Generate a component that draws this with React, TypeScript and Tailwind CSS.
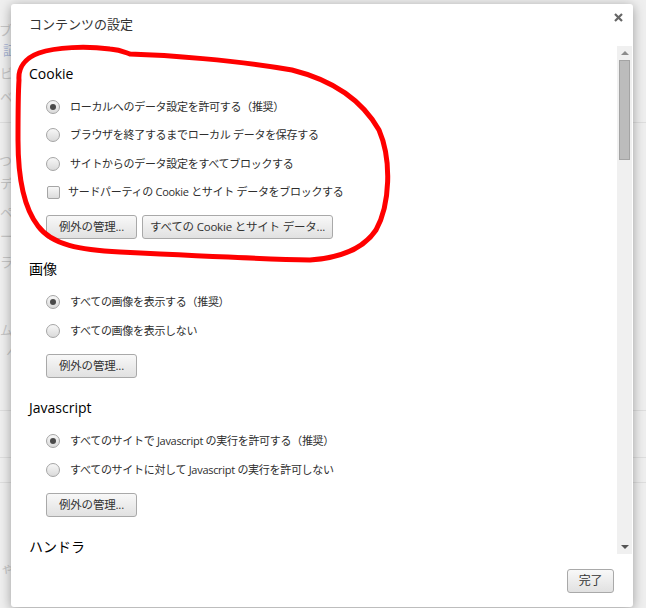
import type { ReactNode } from 'react'

function Radio({ checked = false }: { checked?: boolean }) {
  return (
    <span className="flex h-[14px] w-[14px] shrink-0 items-center justify-center rounded-full border border-[#a5a5a5] bg-linear-to-b from-[#f7f7f7] to-[#dadada]">
      {checked && <span className="h-[6px] w-[6px] rounded-full bg-[#4a4a4a]" />}
    </span>
  )
}

function Checkbox() {
  return (
    <span className="ml-px h-[13px] w-[13px] shrink-0 rounded-[2px] border border-[#a5a5a5] bg-linear-to-b from-[#f7f7f7] to-[#dcdcdc]" />
  )
}

function Button({ children, className = '' }: { children: ReactNode; className?: string }) {
  return (
    <button
      type="button"
      className={`flex h-[24px] items-center justify-center rounded-[3px] border border-[#a9a9a9] bg-linear-to-b from-[#f8f8f8] to-[#e1e1e1] text-[11.5px] tracking-[-0.2px] text-[#333] ${className}`}
    >
      {children}
    </button>
  )
}

function Option({ label, checked, rowClass = 'h-[29px]' }: { label: string; checked?: boolean; rowClass?: string }) {
  return (
    <div className={`flex items-center pl-[17px] ${rowClass}`}>
      <Radio checked={checked} />
      <span className="ml-[10px] whitespace-nowrap text-[11px] tracking-[-0.3px] text-[#2e2e2e]">{label}</span>
    </div>
  )
}

function Section({ title, children }: { title: string; children: ReactNode }) {
  return (
    <section className="mb-[20px]">
      <h3 className="h-[20px] text-[14px] leading-[20px] text-black">{title}</h3>
      <div className="pt-[9px]">{children}</div>
    </section>
  )
}

// the settings page behind the dialog: only its left edge peeks out
function BackgroundPage() {
  return (
    <div className="flex flex-col pt-[20px] text-[13px] leading-[20px] text-[#c6c6c6]">
      <div className="-ml-[1px] h-[20px] whitespace-nowrap">ブラ</div>
      <div className="h-[20px] whitespace-nowrap pl-[3px] text-[#a9b6d6]">証明</div>
      <div className="mt-[3px] h-[20px] whitespace-nowrap">ビデ</div>
      <div className="mt-[4px] h-[20px] whitespace-nowrap">ベル</div>
      <div className="mt-[15px] h-px bg-[#dedede]" />
      <div className="-ml-[1px] mt-[27px] h-[20px] whitespace-nowrap">つい</div>
      <div className="mt-[3px] h-[20px] whitespace-nowrap">デフ</div>
      <div className="mt-[9px] h-[20px] whitespace-nowrap">ペー</div>
      <div className="mt-[4px] h-[20px] whitespace-nowrap">ート</div>
      <div className="mt-[6px] h-[20px] whitespace-nowrap">ラッ</div>
      <div className="mt-[48px] h-[20px] whitespace-nowrap">ムー</div>
      <div className="h-[20px] whitespace-nowrap pl-[6px] italic">パ</div>
      <div className="mt-[50px] h-px bg-[#dedede]" />
      <div className="mt-[46px] h-px bg-[#dedede]" />
      <div className="mt-[24px] h-px bg-[#dedede]" />
      <div className="mt-[75px] h-[20px] whitespace-nowrap italic">ゃの</div>
    </div>
  )
}

function Scrollbar() {
  return (
    <div className="mr-px flex w-[15px] flex-col items-center bg-[#f0f0f0]">
      <div className="flex h-[14px] items-center justify-center">
        <span className="h-0 w-0 border-x-[4px] border-b-[4px] border-x-transparent border-b-[#8c8c8c]" />
      </div>
      <div className="h-[100px] w-[11px] border border-[#a4a4a4] bg-[#bcbcbc]" />
      <div className="flex-1" />
      <div className="flex h-[14px] items-center justify-center">
        <span className="h-0 w-0 border-x-[4px] border-t-[4px] border-x-transparent border-t-[#555]" />
      </div>
    </div>
  )
}

export default function App() {
  return (
    <div className="relative h-[608px] w-[646px] overflow-hidden bg-[#efefef] font-['Open_Sans','Noto_Sans_CJK_JP',sans-serif]">
      <BackgroundPage />

      <div className="absolute left-[11px] top-[4px] flex h-[603px] w-[622px] flex-col rounded-[3px] bg-white shadow-[0_2px_12px_rgba(0,0,0,0.35)]">
        <header className="flex h-[42px] shrink-0 justify-between">
          <h2 className="pl-[18px] pt-[10px] text-[13px] leading-[20px] text-[#333]">コンテンツの設定</h2>
          <button type="button" aria-label="閉じる" className="mr-[10px] mt-[9px] flex h-[9px] w-[9px] items-center justify-center">
            <svg width="9" height="9" viewBox="0 0 9 9">
              <path d="M1 1 L8 8 M8 1 L1 8" stroke="#666" strokeWidth="2.2" />
            </svg>
          </button>
        </header>

        <div className="flex h-[508px] shrink-0">
          <div className="flex-1 overflow-hidden pl-[18px] pt-[17.5px]">
            <Section title="Cookie">
              <Option checked rowClass="h-[28.5px]" label="ローカルへのデータ設定を許可する（推奨）" />
              <Option rowClass="h-[28.5px]" label="ブラウザを終了するまでローカル データを保存する" />
              <Option rowClass="h-[28.5px]" label="サイトからのデータ設定をすべてブロックする" />
              <div className="flex h-[28.5px] items-center pl-[17px]">
                <Checkbox />
                <span className="ml-[8px] whitespace-nowrap text-[11px] tracking-[-0.3px] text-[#2e2e2e]">
                  サードパーティの Cookie とサイト データをブロックする
                </span>
              </div>
              <div className="mt-[8px] flex gap-[5px] pl-[17px]">
                <Button className="w-[91px]">例外の管理...</Button>
                <Button className="w-[191px]">すべての Cookie とサイト データ...</Button>
              </div>
            </Section>

            <Section title="画像">
              <Option checked label="すべての画像を表示する（推奨）" />
              <Option label="すべての画像を表示しない" />
              <div className="mt-[8px] pl-[17px]">
                <Button className="w-[91px]">例外の管理...</Button>
              </div>
            </Section>

            <Section title="Javascript">
              <Option checked label="すべてのサイトで Javascript の実行を許可する（推奨）" />
              <Option label="すべてのサイトに対して Javascript の実行を許可しない" />
              <div className="mt-[8px] pl-[17px]">
                <Button className="w-[91px]">例外の管理...</Button>
              </div>
            </Section>

            <Section title="ハンドラ">
              <div />
            </Section>
          </div>
          <Scrollbar />
        </div>

        <footer className="flex flex-1 justify-end pr-[19px] pt-[15px]">
          <Button className="w-[47px] text-[12px]">完了</Button>
        </footer>
      </div>

      <svg className="pointer-events-none absolute inset-0" width="646" height="608" viewBox="0 0 646 608">
        <path
          d="M19 80 C18 68 25 58 39 53 C56 47 86 46 110 49 C122 50 126 53 130 54 C165 55 235 60 292 70 C332 80 362 100 379 130 C392 160 390 205 376 230 C364 248 340 258 310 260 C260 259 180 255 120 252 C80 250 52 245 38 226 C24 208 18 180 18 140 C18 115 18 95 19 80 Z"
          fill="none"
          stroke="#ff0000"
          strokeWidth="5"
          strokeLinecap="round"
          strokeLinejoin="round"
        />
      </svg>
    </div>
  )
}
